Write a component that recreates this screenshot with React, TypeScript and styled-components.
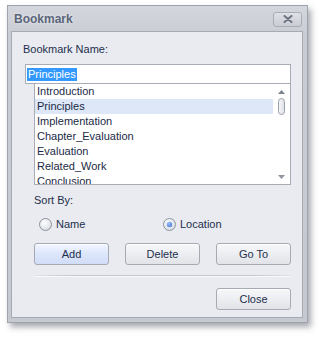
import React from "react";
import styled, { createGlobalStyle } from "styled-components";

const Global = createGlobalStyle`
  html, body { margin: 0; padding: 0; background: #ffffff; }
  body { font-family: "Liberation Sans", Arial, sans-serif; }
`;

const Page = styled.div`
  width: 321px;
  height: 338px;
  padding: 5px 0 0 7px;
  box-sizing: border-box;
`;

const Window = styled.div`
  width: 301px;
  height: 318px;
  box-sizing: border-box;
  border: 1px solid #9ea3ad;
  background: linear-gradient(#d3d6dc, #c9ccd3 30px, #c6c9d0);
  box-shadow: 3px 4px 6px rgba(60, 65, 80, 0.45);
  display: flex;
  flex-direction: column;
  padding: 0 4px 4px 3px;
`;

const TitleBar = styled.div`
  height: 25px;
  flex: none;
  display: flex;
  align-items: center;
  justify-content: space-between;
  padding: 0 1px 0 3px;
`;

const Title = styled.span`
  font-family: "Liberation Sans", Arial, sans-serif;
  font-weight: bold;
  font-size: 12px;
  color: #5a6579;
  text-shadow: 0 0 3px rgba(255, 255, 255, 0.7);
  margin-top: 1px;
`;

const CloseX = styled.div`
  width: 29px;
  height: 15px;
  box-sizing: border-box;
  border: 1px solid #a9adb5;
  border-radius: 3px;
  background: linear-gradient(#dfe1e6, #c9ccd3);
  display: flex;
  align-items: center;
  justify-content: center;
  margin-top: 1px;
`;

const Client = styled.div`
  flex: 1;
  box-sizing: border-box;
  border: 1px solid #a6abb3;
  background: #e9ebf0;
  padding: 10px 11px 0 11px;
  display: flex;
  flex-direction: column;
  font-size: 11px;
  color: #1e2f4d;
`;

const Label = styled.div<{ $indent?: number }>`
  line-height: 14px;
  height: 14px;
  margin-left: ${(p) => p.$indent ?? 0}px;
  color: #1e2f4d;
`;

const TextBox = styled.div`
  margin: 8px 0 0 2px;
  height: 20px;
  box-sizing: border-box;
  border: 1px solid #a7acb5;
  background: #ffffff;
  display: flex;
  align-items: center;
  padding-left: 1px;
`;

const Selected = styled.span`
  background: #3399ff;
  color: #ffffff;
  line-height: 13px;
  padding: 0 1px;
`;

const ListBox = styled.div`
  margin: -1px 0 0 11px;
  height: 102px;
  box-sizing: border-box;
  border: 1px solid #a7acb5;
  background: #ffffff;
  display: flex;
  overflow: hidden;
`;

const Items = styled.div`
  flex: 1;
  overflow: hidden;
`;

const Item = styled.div<{ $active?: boolean }>`
  height: 15px;
  line-height: 15px;
  padding-left: 2px;
  background: ${(p) => (p.$active ? "#dde7f8" : "transparent")};
  color: #1b2a46;
  white-space: nowrap;
`;

const ScrollBar = styled.div`
  width: 17px;
  flex: none;
  display: flex;
  flex-direction: column;
  align-items: center;
  padding-top: 6px;
  box-sizing: border-box;
`;

const Thumb = styled.div`
  width: 7px;
  height: 17px;
  box-sizing: border-box;
  border: 1px solid #9aa0aa;
  border-radius: 4px;
  background: linear-gradient(90deg, #f4f5f7, #dfe2e7);
  margin-top: 4px;
`;

const Spacer = styled.div`
  flex: 1;
`;

const RadioRow = styled.div`
  margin: 10px 0 0 16px;
  display: flex;
  height: 14px;
  align-items: center;
`;

const RadioItem = styled.label<{ $width?: number }>`
  display: flex;
  align-items: center;
  gap: 4px;
  width: ${(p) => (p.$width ? `${p.$width}px` : "auto")};
  color: #1e2f4d;
`;

const RadioCircle = styled.span<{ $checked?: boolean }>`
  width: 13px;
  height: 13px;
  box-sizing: border-box;
  border-radius: 50%;
  border: 1px solid #8c939e;
  background: radial-gradient(circle at 40% 35%, #ffffff, #e2e5ea 60%, #c9ced6);
  display: flex;
  align-items: center;
  justify-content: center;
  &::after {
    content: "";
    display: ${(p) => (p.$checked ? "block" : "none")};
    width: 5px;
    height: 5px;
    border-radius: 50%;
    background: radial-gradient(circle at 40% 35%, #9ec3ff, #2a5fc8);
    box-shadow: 0 0 1px #3b6fd0;
  }
`;

const ButtonRow = styled.div`
  margin: 12px 0 0 11px;
  display: flex;
  justify-content: space-between;
`;

const Button = styled.div<{ $focused?: boolean }>`
  width: 75px;
  height: 22px;
  box-sizing: border-box;
  border: 1px solid #a6aab2;
  border-radius: 3px;
  background: ${(p) =>
    p.$focused
      ? "linear-gradient(#f2f6ff, #dce6fb 50%, #d1ddf7)"
      : "linear-gradient(#f6f7f9, #eceef1 50%, #e1e3e8)"};
  box-shadow: inset 0 1px 0 rgba(255, 255, 255, 0.8);
  display: flex;
  align-items: center;
  justify-content: center;
  color: #1e2f4d;
  font-size: 11px;
`;

const Separator = styled.div`
  margin: 10px 0 0 11px;
  height: 1px;
  background: linear-gradient(90deg, rgba(190, 194, 202, 0.2), #c2c6cd 15%, #c2c6cd 85%, rgba(190, 194, 202, 0.2));
  box-shadow: 0 1px 0 rgba(255, 255, 255, 0.7);
`;

const Footer = styled.div`
  margin-top: 12px;
  display: flex;
  justify-content: flex-end;
`;

const items = [
  "Introduction",
  "Principles",
  "Implementation",
  "Chapter_Evaluation",
  "Evaluation",
  "Related_Work",
  "Conclusion",
];

export default function App() {
  return (
    <>
      <Global />
      <Page>
        <Window>
          <TitleBar>
            <Title>Bookmark</Title>
            <CloseX>
              <svg width="10" height="8" viewBox="0 0 10 8">
                <path d="M1.5 1 L8.5 7 M8.5 1 L1.5 7" stroke="#6c7280" strokeWidth="2" strokeLinecap="round" />
              </svg>
            </CloseX>
          </TitleBar>
          <Client>
            <Label>Bookmark Name:</Label>
            <TextBox>
              <Selected>Principles</Selected>
            </TextBox>
            <ListBox>
              <Items>
                {items.map((it) => (
                  <Item key={it} $active={it === "Principles"}>
                    {it}
                  </Item>
                ))}
              </Items>
              <ScrollBar>
                <svg width="7" height="4" viewBox="0 0 7 4">
                  <path d="M0 4 L3.5 0 L7 4 Z" fill="#7d838e" />
                </svg>
                <Thumb />
                <Spacer />
                <svg width="7" height="4" viewBox="0 0 7 4" style={{ marginBottom: 5 }}>
                  <path d="M0 0 L7 0 L3.5 4 Z" fill="#9096a0" />
                </svg>
              </ScrollBar>
            </ListBox>
            <Label $indent={11} style={{ marginTop: 8 }}>Sort By:</Label>
            <RadioRow>
              <RadioItem $width={124}>
                <RadioCircle />
                Name
              </RadioItem>
              <RadioItem>
                <RadioCircle $checked />
                Location
              </RadioItem>
            </RadioRow>
            <ButtonRow>
              <Button $focused>Add</Button>
              <Button>Delete</Button>
              <Button>Go To</Button>
            </ButtonRow>
            <Separator />
            <Footer>
              <Button>Close</Button>
            </Footer>
          </Client>
        </Window>
      </Page>
    </>
  );
}
